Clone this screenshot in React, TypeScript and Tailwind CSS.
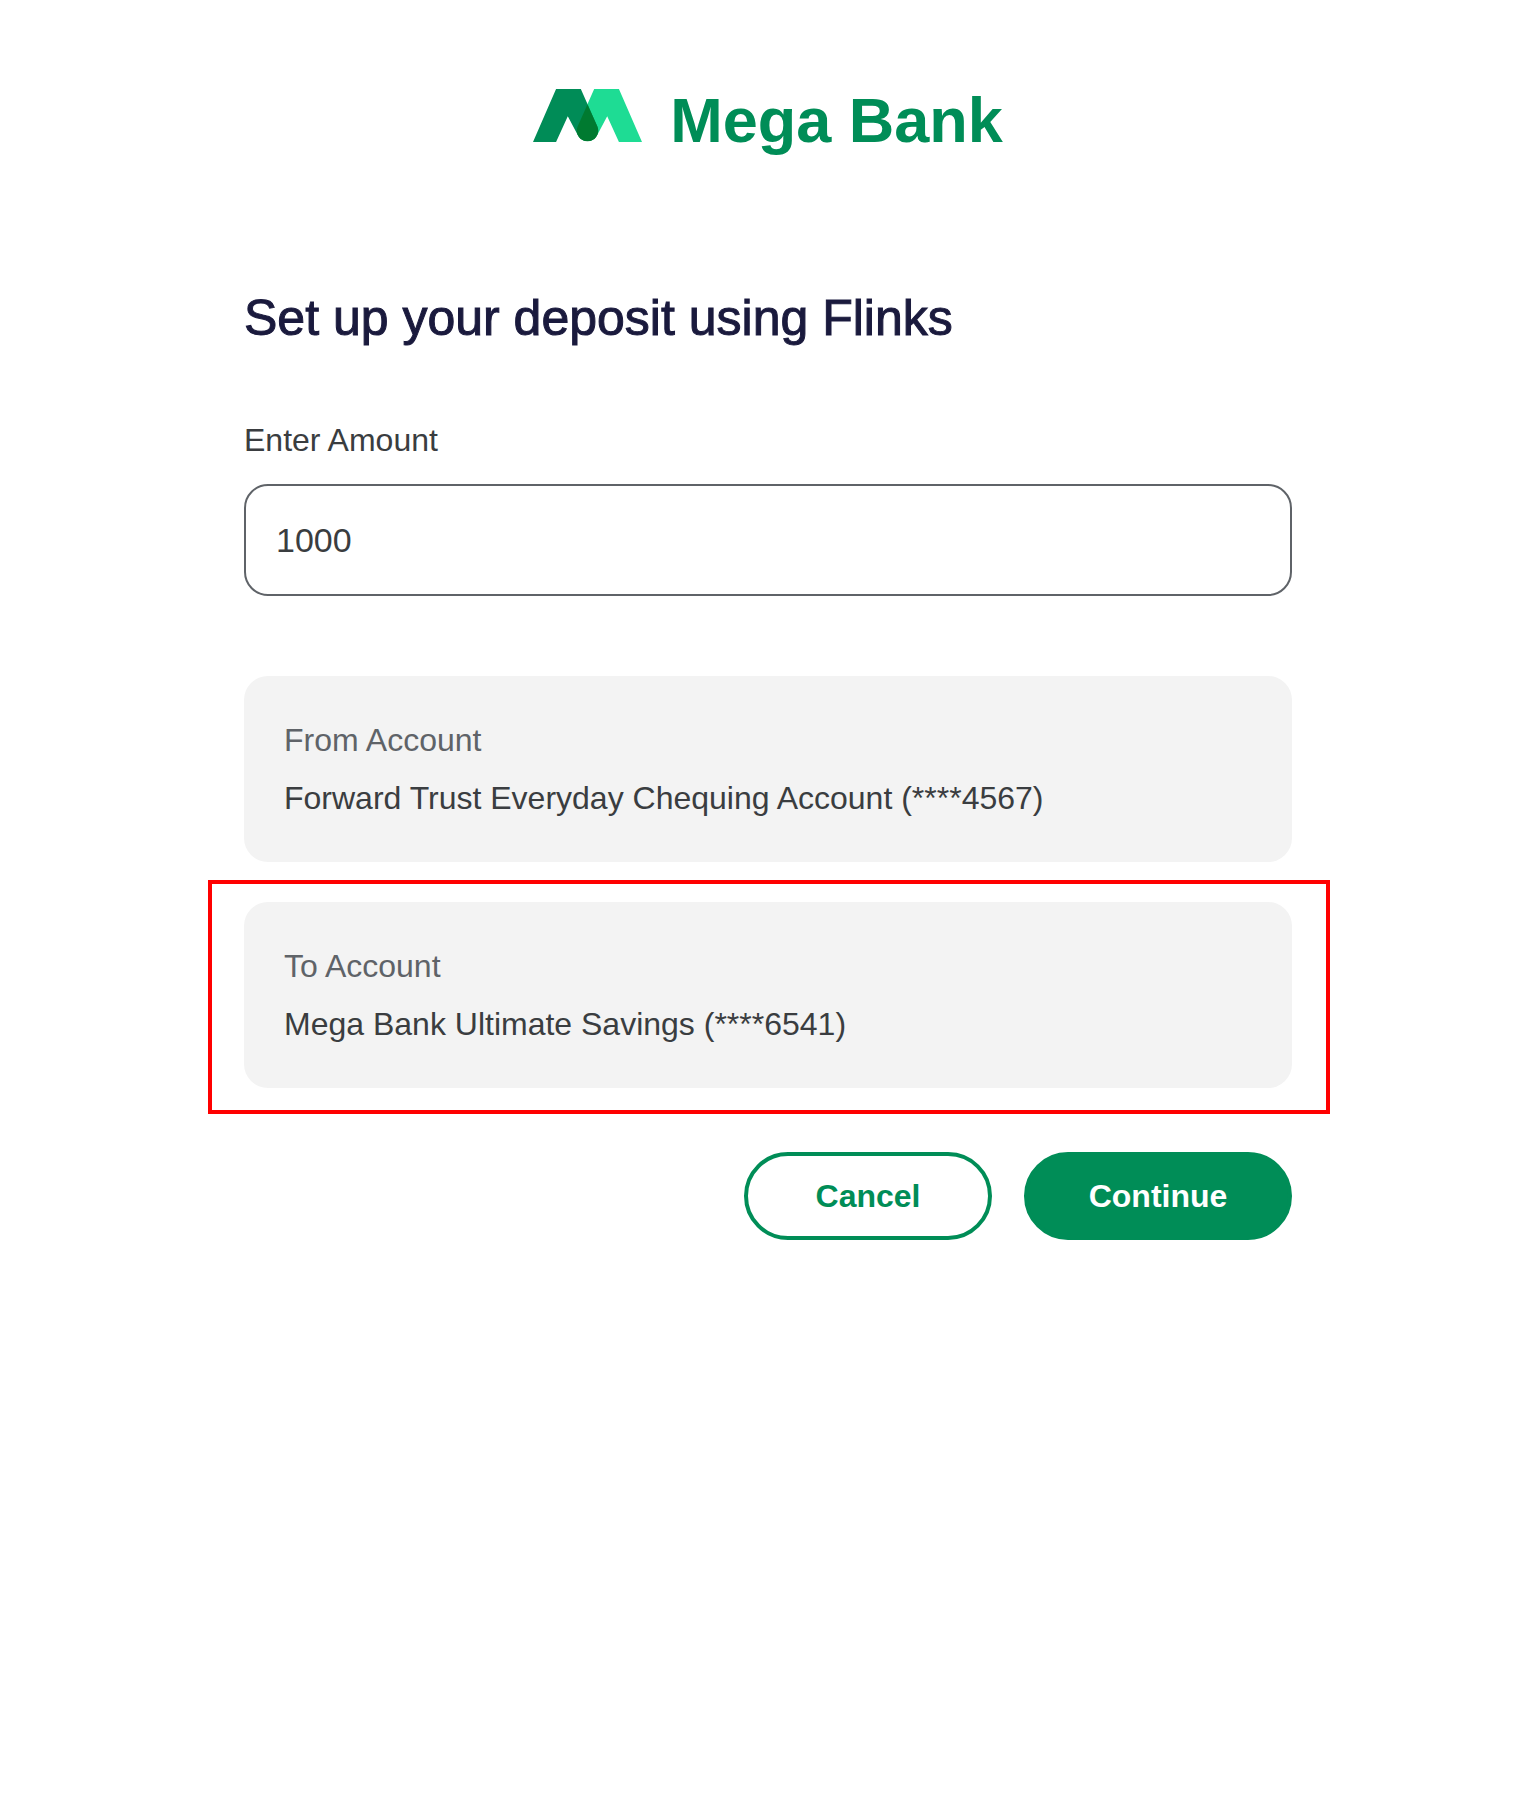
import type { ButtonHTMLAttributes } from "react";
import clsx from "clsx";

function Logo() {
  return (
    <div className="flex items-baseline justify-center gap-7">
      <svg width="109" height="53" viewBox="0 0 108.7 52.7" aria-hidden="true">
        <path
          fill="#1edc94"
          d="M108.7 52.7 85.7 0H61L44.6 37A10.7 10.7 0 0 0 64.1 45.8L74 27 85.7 52.7Z"
        />
        <path
          fill="#008c57"
          d="M0 52.7 23 0H47.7L64.1 37A10.7 10.7 0 0 1 44.6 45.8L34.7 27 23 52.7Z"
        />
        <path fill="#007a30" d="M54.3 15.3 64.1 37A10.7 10.7 0 1 1 44.6 37Z" />
      </svg>
      <span className="text-[63px] leading-[80px] font-bold text-[#008d57]">
        Mega Bank
      </span>
    </div>
  );
}

function AccountCard({ label, account }: { label: string; account: string }) {
  return (
    <div className="flex flex-col gap-[10px] rounded-3xl bg-[#f3f3f3] p-10 text-[32px] leading-[48px]">
      <p className="text-[#5f6368]">{label}</p>
      <p className="text-[#3a3d40]">{account}</p>
    </div>
  );
}

interface ButtonProps extends ButtonHTMLAttributes<HTMLButtonElement> {
  outlined?: boolean;
}

function Button({ outlined, className, ...props }: ButtonProps) {
  return (
    <button
      type="button"
      className={clsx(
        "h-[88px] rounded-full border-4 border-[#008d57] text-[32px] font-bold",
        outlined ? "bg-white text-[#008d57]" : "bg-[#008d57] text-white",
        className
      )}
      {...props}
    />
  );
}

export default function App() {
  return (
    <main className="min-h-screen bg-white px-10 py-20 font-['Liberation_Sans',Arial,sans-serif]">
      <header>
        <Logo />
      </header>

      <form className="mx-auto mt-32 w-full max-w-[1048px]">
        <h1 className="text-[50px] leading-[60px] text-[#1a1a3d] [-webkit-text-stroke:1px_#1a1a3d]">
          Set up your deposit using Flinks
        </h1>

        <label htmlFor="amount" className="mt-[68px] block text-[32px] leading-[48px] text-[#3a3d40]">
          Enter Amount
        </label>
        <input
          id="amount"
          type="text"
          inputMode="decimal"
          defaultValue="1000"
          className="mt-5 block h-[112px] w-full rounded-3xl border-2 border-[#5f6368] bg-white px-[30px] text-[34px] text-[#3a3d40]"
        />

        <div className="mt-20">
          <AccountCard label="From Account" account="Forward Trust Everyday Chequing Account (****4567)" />
        </div>

        <div className="-mr-[38px] -ml-9 mt-[18px] border-4 border-[#ff0000] pt-[18px] pr-[34px] pb-[22px] pl-8">
          <AccountCard label="To Account" account="Mega Bank Ultimate Savings (****6541)" />
        </div>

        <div className="mt-[38px] flex justify-end gap-8">
          <Button outlined className="w-[248px]">
            Cancel
          </Button>
          <Button className="w-[268px]">Continue</Button>
        </div>
      </form>
    </main>
  );
}
